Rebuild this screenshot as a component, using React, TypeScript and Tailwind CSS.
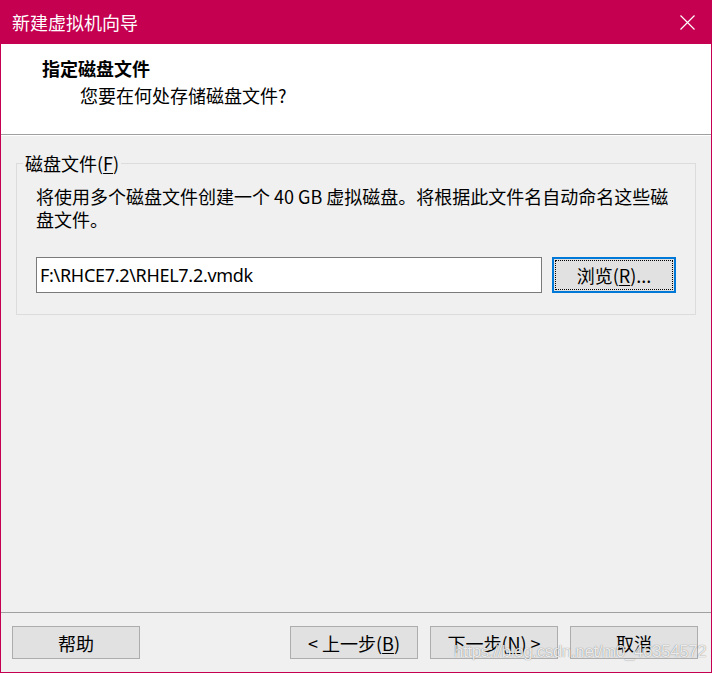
import React from "react";

const CJK = "font-['Microsoft_YaHei_UI','Noto_Sans_CJK_SC',sans-serif]";

function Btn({ children, focused }: { children: React.ReactNode; focused?: boolean }) {
  if (focused) {
    return (
      <div className="w-[124px] h-[36px] border-2 border-[#0078d7] bg-[#e1e1e1] p-[1px] shrink-0">
        <div className="w-full h-full border border-dotted border-black flex items-center justify-center text-[18px] leading-none text-black">
          {children}
        </div>
      </div>
    );
  }
  return (
    <div className="w-[128px] h-[33px] border border-[#adadad] bg-[#e1e1e1] flex items-center justify-center text-[18px] leading-none text-black">
      {children}
    </div>
  );
}

export default function App() {
  return (
    <div className={`relative w-[712px] h-[673px] flex flex-col border border-t-0 border-[#c50050] bg-[#f0f0f0] ${CJK}`}>
      {/* Title bar */}
      <div className="h-[44px] bg-[#c50050] flex items-center justify-between shrink-0 -mx-[1px] px-[1px]">
        <div className="pl-[11px] text-white text-[18px] leading-none">新建虚拟机向导</div>
        <div className="w-[48px] h-full flex items-center justify-center">
          <svg width="15" height="15" viewBox="0 0 15 15">
            <path d="M0.5 0.5 L14.5 14.5 M14.5 0.5 L0.5 14.5" stroke="white" strokeWidth="1.2" fill="none" />
          </svg>
        </div>
      </div>

      {/* Header */}
      <div className="h-[91px] bg-white border-b border-[#a0a0a0] pt-[12px] shrink-0">
        <div className="pl-[41px] text-[18px] leading-[24px] font-bold text-black">指定磁盘文件</div>
        <div className="pl-[79px] mt-[3px] text-[18px] leading-[24px] text-black">您要在何处存储磁盘文件?</div>
      </div>

      {/* Body */}
      <div className="flex-1 border-t border-white px-[15px] pt-[15px]">
        <fieldset className="w-[680px] border border-[#dcdcdc] pl-[19px] pr-[19px] pb-[21px]">
          <legend className="-ml-[13px] px-[2px] text-[18px] leading-[24px] text-black">
            磁盘文件(<span className="underline underline-offset-2">F</span>)
          </legend>
          <div className="mt-[10px] text-[18px] leading-[23px] text-black">
            将使用多个磁盘文件创建一个 40 GB 虚拟磁盘。将根据此文件名自动命名这些磁
            <br />
            盘文件。
          </div>
          <div className="mt-[26px] flex items-center gap-[10px]">
            <div className="w-[506px] h-[36px] bg-white border border-[#7a7a7a] flex items-center pl-[3px] text-[18px] text-black font-['Segoe_UI','Noto_Sans',sans-serif] tracking-[-0.3px]">
              F:\RHCE7.2\RHEL7.2.vmdk
            </div>
            <Btn focused>
              浏览(<span className="underline underline-offset-2">R</span>)...
            </Btn>
          </div>
        </fieldset>
      </div>

      {/* Footer */}
      <div className="h-[60px] shrink-0 border-t border-[#a0a0a0] flex pt-[13px] pl-[11px] pr-[13px]">
        <Btn>帮助</Btn>
        <div className="flex-1" />
        <div className="flex gap-[12px]">
          <Btn>
            &lt; 上一步(<span className="underline underline-offset-2">B</span>)
          </Btn>
          <Btn>
            下一步(<span className="underline underline-offset-2">N</span>) &gt;
          </Btn>
          <Btn>取消</Btn>
        </div>
      </div>

      {/* Watermark */}
      <div className="absolute left-[453px] top-[643px] text-[17px] leading-none tracking-[-0.4px] text-white/85 font-['Liberation_Sans',sans-serif] [text-shadow:0_0_1px_rgba(0,0,0,0.55)] pointer-events-none">
        https://blog.csdn.net/m0_46354572
      </div>
    </div>
  );
}
